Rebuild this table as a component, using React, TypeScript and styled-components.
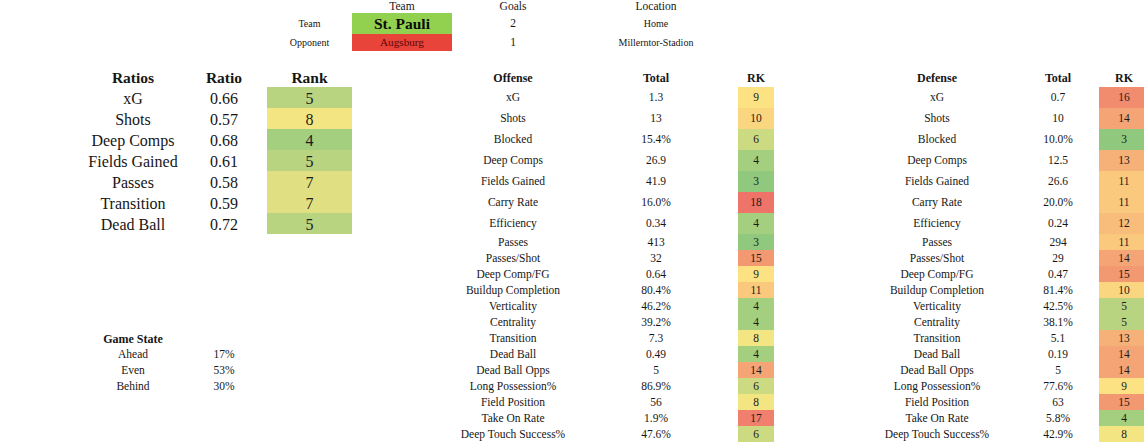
import React from "react";
import styled, { createGlobalStyle } from "styled-components";

const GlobalStyle = createGlobalStyle`
  html, body {
    margin: 0;
    padding: 0;
    background: #ffffff;
    overflow: hidden;
  }
  body {
    font-family: "Liberation Serif", "Times New Roman", serif;
    color: #161616;
  }
`;

/* column lines of the sheet */
const COL = {
  ratioLabel: 2,
  ratioValue: 3,
  rank: 5,
  teamBox: 6,
  offLabel: 7,
  offTotal: 8,
  offRank: 9,
  defLabel: 11,
  defTotal: 12,
  defRank: 13,
};

const FIRST_DATA_ROW = 6;

const Sheet = styled.div`
  display: grid;
  grid-template-columns: 78px 110px 72px 7px 85px 100px 122px 164px 36px 83px 160px 82px 50px;
  grid-template-rows: 13px 21px 17px 15px 21px repeat(7, 21px) repeat(13, 16px);
  width: 1149px;
`;

type Pos = { $col: number; $row: number };

const Cell = styled.div<Pos>`
  grid-column: ${(p) => p.$col};
  grid-row: ${(p) => p.$row};
  display: flex;
  align-items: center;
  justify-content: center;
  white-space: nowrap;
  line-height: 1;
`;

const TopHeading = styled(Cell)`
  font-size: 11.5px;
  padding-top: 1px;
`;

const SmallLabel = styled(Cell)`
  font-size: 10px;
  padding-top: 1px;
`;

const TeamName = styled(Cell)<{ $tone: "win" | "loss" }>`
  background: ${(p) => (p.$tone === "win" ? "#92d050" : "#e8443a")};
  color: ${(p) => (p.$tone === "win" ? "#0a0a0a" : "#5e0606")};
  font-size: ${(p) => (p.$tone === "win" ? "15.5px" : "11.2px")};
  font-weight: ${(p) => (p.$tone === "win" ? 700 : 400)};
  padding-top: 1px;
`;

const GoalValue = styled(Cell)`
  font-size: 11.5px;
  padding-top: 1px;
`;

const RatiosHeading = styled(Cell)`
  font-size: 15.5px;
  font-weight: 700;
  padding-top: 2px;
`;

const StatHeading = styled(Cell)`
  font-size: 12px;
  font-weight: 700;
  padding-top: 2px;
`;

const RatioText = styled(Cell)`
  font-size: 16px;
  padding-top: 2px;
`;

const StatText = styled(Cell)`
  font-size: 11.5px;
  padding-top: 1px;
`;

const RankBox = styled(Cell)<{ $big?: boolean }>`
  font-size: ${(p) => (p.$big ? "16px" : "11.5px")};
  padding-top: ${(p) => (p.$big ? "2px" : "1px")};
  color: #1c1c1c;
`;

const mix = (a: number[], b: number[], t: number) =>
  `rgb(${a.map((v, i) => Math.round(v + (b[i] - v) * t)).join(",")})`;

const rankColor = (r: number) => {
  const green = [104, 190, 123];
  const yellow = [254, 232, 132];
  const red = [238, 116, 106];
  const lo = 1;
  const mid = 8.5;
  const hi = 18;
  if (r <= mid) return mix(green, yellow, (r - lo) / (mid - lo));
  return mix(yellow, red, (r - mid) / (hi - mid));
};

const ratios: [string, string, number][] = [
  ["xG", "0.66", 5],
  ["Shots", "0.57", 8],
  ["Deep Comps", "0.68", 4],
  ["Fields Gained", "0.61", 5],
  ["Passes", "0.58", 7],
  ["Transition", "0.59", 7],
  ["Dead Ball", "0.72", 5],
];

const labels = [
  "xG",
  "Shots",
  "Blocked",
  "Deep Comps",
  "Fields Gained",
  "Carry Rate",
  "Efficiency",
  "Passes",
  "Passes/Shot",
  "Deep Comp/FG",
  "Buildup Completion",
  "Verticality",
  "Centrality",
  "Transition",
  "Dead Ball",
  "Dead Ball Opps",
  "Long Possession%",
  "Field Position",
  "Take On Rate",
  "Deep Touch Success%",
];

const offense: [string, number][] = [
  ["1.3", 9],
  ["13", 10],
  ["15.4%", 6],
  ["26.9", 4],
  ["41.9", 3],
  ["16.0%", 18],
  ["0.34", 4],
  ["413", 3],
  ["32", 15],
  ["0.64", 9],
  ["80.4%", 11],
  ["46.2%", 4],
  ["39.2%", 4],
  ["7.3", 8],
  ["0.49", 4],
  ["5", 14],
  ["86.9%", 6],
  ["56", 8],
  ["1.9%", 17],
  ["47.6%", 6],
];

const defense: [string, number][] = [
  ["0.7", 16],
  ["10", 14],
  ["10.0%", 3],
  ["12.5", 13],
  ["26.6", 11],
  ["20.0%", 11],
  ["0.24", 12],
  ["294", 11],
  ["29", 14],
  ["0.47", 15],
  ["81.4%", 10],
  ["42.5%", 5],
  ["38.1%", 5],
  ["5.1", 13],
  ["0.19", 14],
  ["5", 14],
  ["77.6%", 9],
  ["63", 15],
  ["5.8%", 4],
  ["42.9%", 8],
];

const gameState: [string, string][] = [
  ["Ahead", "17%"],
  ["Even", "53%"],
  ["Behind", "30%"],
];

const MatchInfo = () => (
  <>
    <TopHeading $col={COL.teamBox} $row={1}>Team</TopHeading>
    <TopHeading $col={COL.offLabel} $row={1}>Goals</TopHeading>
    <TopHeading $col={COL.offTotal} $row={1}>Location</TopHeading>

    <SmallLabel $col={COL.rank} $row={2}>Team</SmallLabel>
    <TeamName $col={COL.teamBox} $row={2} $tone="win">St. Pauli</TeamName>
    <GoalValue $col={COL.offLabel} $row={2}>2</GoalValue>
    <SmallLabel $col={COL.offTotal} $row={2}>Home</SmallLabel>

    <SmallLabel $col={COL.rank} $row={3}>Opponent</SmallLabel>
    <TeamName $col={COL.teamBox} $row={3} $tone="loss">Augsburg</TeamName>
    <GoalValue $col={COL.offLabel} $row={3}>1</GoalValue>
    <SmallLabel $col={COL.offTotal} $row={3}>Millerntor-Stadion</SmallLabel>
  </>
);

const RatiosTable = () => (
  <>
    <RatiosHeading $col={COL.ratioLabel} $row={5}>Ratios</RatiosHeading>
    <RatiosHeading $col={COL.ratioValue} $row={5}>Ratio</RatiosHeading>
    <RatiosHeading $col={COL.rank} $row={5}>Rank</RatiosHeading>
    {ratios.map(([label, value, rank], i) => (
      <React.Fragment key={label}>
        <RatioText $col={COL.ratioLabel} $row={FIRST_DATA_ROW + i}>{label}</RatioText>
        <RatioText $col={COL.ratioValue} $row={FIRST_DATA_ROW + i}>{value}</RatioText>
        <RankBox
          $big
          $col={COL.rank}
          $row={FIRST_DATA_ROW + i}
          style={{ background: rankColor(rank) }}
        >
          {rank}
        </RankBox>
      </React.Fragment>
    ))}
  </>
);

const GameStateTable = () => {
  const start = FIRST_DATA_ROW + 13;
  return (
    <>
      <StatHeading $col={COL.ratioLabel} $row={start}>Game State</StatHeading>
      {gameState.map(([label, pct], i) => (
        <React.Fragment key={label}>
          <StatText $col={COL.ratioLabel} $row={start + 1 + i}>{label}</StatText>
          <StatText $col={COL.ratioValue} $row={start + 1 + i}>{pct}</StatText>
        </React.Fragment>
      ))}
    </>
  );
};

const StatTable = ({
  title,
  rows,
  labelCol,
  totalCol,
  rankCol,
}: {
  title: string;
  rows: [string, number][];
  labelCol: number;
  totalCol: number;
  rankCol: number;
}) => (
  <>
    <StatHeading $col={labelCol} $row={5}>{title}</StatHeading>
    <StatHeading $col={totalCol} $row={5}>Total</StatHeading>
    <StatHeading $col={rankCol} $row={5}>RK</StatHeading>
    {rows.map(([total, rank], i) => (
      <React.Fragment key={labels[i]}>
        <StatText $col={labelCol} $row={FIRST_DATA_ROW + i}>{labels[i]}</StatText>
        <StatText $col={totalCol} $row={FIRST_DATA_ROW + i}>{total}</StatText>
        <RankBox
          $col={rankCol}
          $row={FIRST_DATA_ROW + i}
          style={{ background: rankColor(rank) }}
        >
          {rank}
        </RankBox>
      </React.Fragment>
    ))}
  </>
);

export default function App() {
  return (
    <>
      <GlobalStyle />
      <Sheet>
        <MatchInfo />
        <RatiosTable />
        <GameStateTable />
        <StatTable
          title="Offense"
          rows={offense}
          labelCol={COL.offLabel}
          totalCol={COL.offTotal}
          rankCol={COL.offRank}
        />
        <StatTable
          title="Defense"
          rows={defense}
          labelCol={COL.defLabel}
          totalCol={COL.defTotal}
          rankCol={COL.defRank}
        />
      </Sheet>
    </>
  );
}
